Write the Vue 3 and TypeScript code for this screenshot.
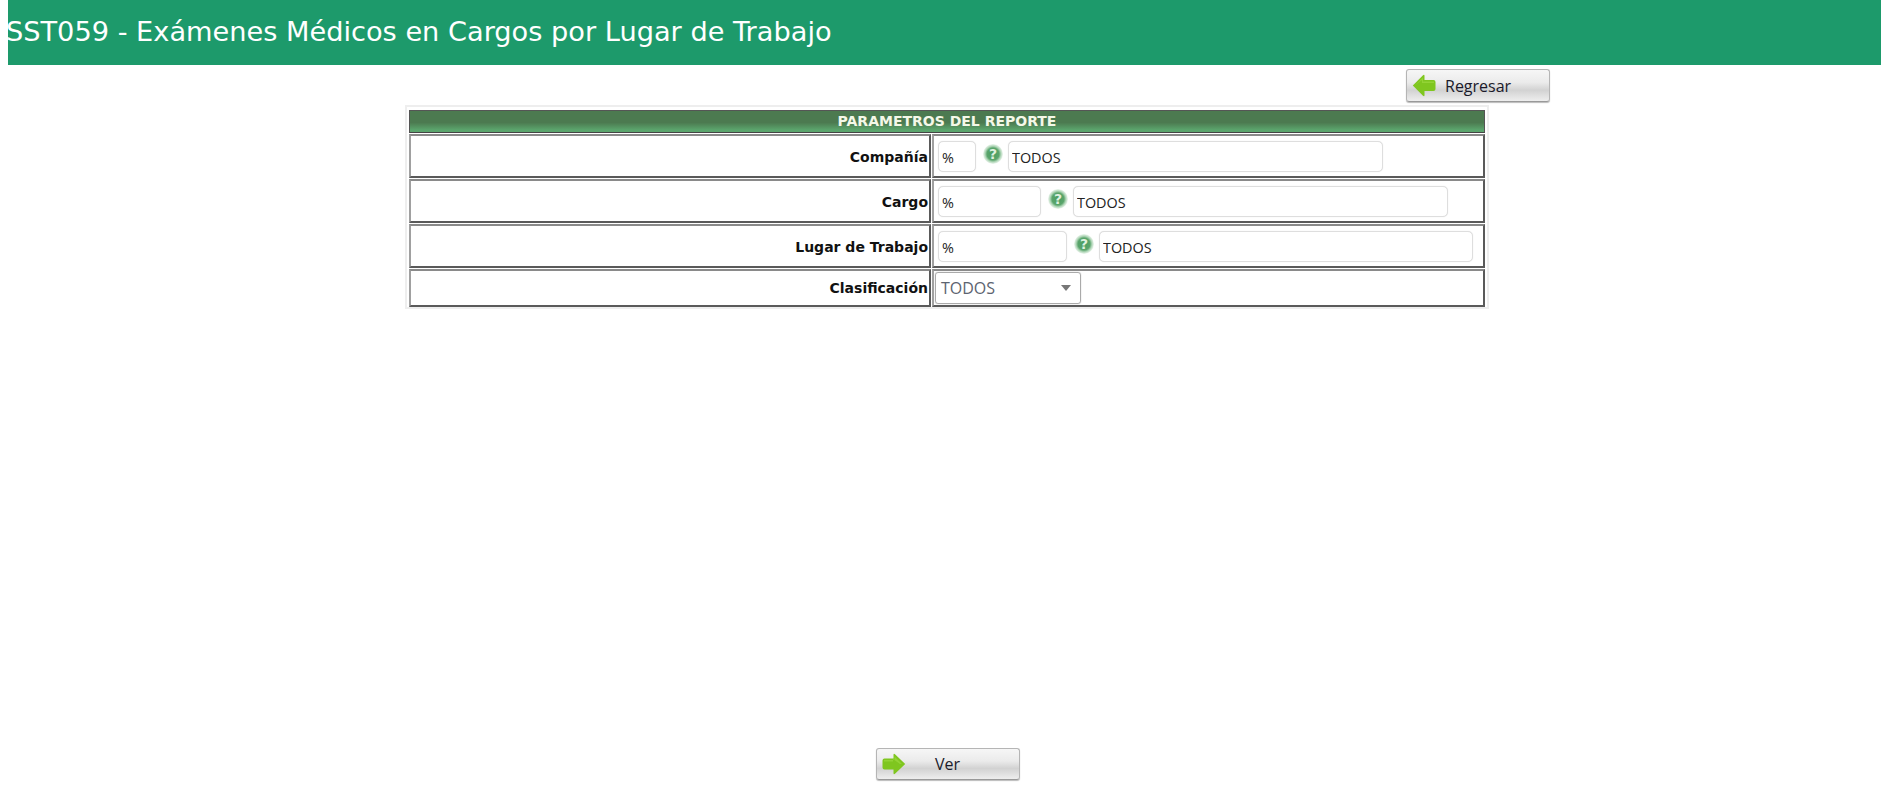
<script setup lang="ts">
interface Row { label: string; codeWidth: number; descWidth: number }
const rows: Row[] = [
  { label: 'Compañía', codeWidth: 38, descWidth: 375 },
  { label: 'Cargo', codeWidth: 103, descWidth: 375 },
  { label: 'Lugar de Trabajo', codeWidth: 129, descWidth: 374 },
]
</script>

<template>
  <div class="page">
    <header class="title-bar"><h1>SST059 - Exámenes Médicos en Cargos por Lugar de Trabajo</h1></header>

    <div class="top-actions">
      <button class="btn" type="button">
        <svg class="arrow" width="24" height="23" viewBox="0 0 24 23">
          <path d="M0.8 11.5 L11 1.2 Q12.5 0 12.5 2 V6 H21.5 Q23.5 6 23.5 8 V15 Q23.5 17 21.5 17 H12.5 V21 Q12.5 23 11 21.8 Z" fill="#7fc61f" />
          <path d="M3 11.5 L11 3.5 V7.5 H22 V9 H10 V6 Z" fill="#9bd93f" opacity="0.7" />
        </svg>
        <span class="btn-text back">Regresar</span>
      </button>
    </div>

    <div class="panel">
      <div class="panel-head">PARAMETROS DEL REPORTE</div>
      <div v-for="r in rows" :key="r.label" class="row">
        <div class="cell label">{{ r.label }}</div>
        <div class="cell field">
          <input class="input" :style="{ width: r.codeWidth + 'px' }" value="%" />
          <svg class="help" width="20" height="20" viewBox="0 0 20 20">
            <defs>
              <radialGradient id="helpGlow" cx="50%" cy="50%" r="50%">
                <stop offset="0%" stop-color="#4a9c5e" />
                <stop offset="60%" stop-color="#5aa56c" />
                <stop offset="80%" stop-color="#b4d8bb" />
                <stop offset="100%" stop-color="#eef6ef" />
              </radialGradient>
            </defs>
            <circle cx="10" cy="10" r="10" fill="url(#helpGlow)" />
            <text x="10" y="15" text-anchor="middle" class="q">?</text>
          </svg>
          <input class="input" :style="{ width: r.descWidth + 'px' }" value="TODOS" />
        </div>
      </div>
      <div class="row last">
        <div class="cell label">Clasificación</div>
        <div class="cell field select-cell">
          <div class="select"><span>TODOS</span><i class="caret"></i></div>
        </div>
      </div>
    </div>

    <div class="bottom-actions">
      <button class="btn low" type="button">
        <svg class="arrow" width="24" height="22" viewBox="0 0 24 22">
          <path d="M23.2 11 L13 1.2 Q11.5 0 11.5 2 V5.5 H2.5 Q0.5 5.5 0.5 7.5 V14.5 Q0.5 16.5 2.5 16.5 H11.5 V20 Q11.5 22 13 20.8 Z" fill="#7fc61f" />
          <path d="M2 7 H12.5 V3.5 L20 11 H18 L11 6 V8.5 H2 Z" fill="#9bd93f" opacity="0.7" />
        </svg>
        <span class="btn-text ver">Ver</span>
      </button>
    </div>
  </div>
</template>

<style>
html, body { margin: 0; background: #fff; }
</style>

<style scoped>
.page { width: 1881px; height: 787px; overflow: hidden; display: flex; flex-direction: column; font-family: "Open Sans", "Noto Sans", sans-serif; }
.title-bar { margin-left: 8px; height: 65px; background: #1d9a6b; flex: none; display: flex; align-items: center; }
.title-bar h1 { margin: 0 0 0 -2px; font: 400 27.2px "DejaVu Sans", sans-serif; color: #fff; white-space: nowrap; padding-bottom: 3px; }
.top-actions { display: flex; justify-content: flex-end; padding: 4px 331px 0 0; height: 36px; flex: none; }
.btn { width: 144px; height: 33px; box-sizing: border-box; display: flex; align-items: center; padding: 0 0 0 5px; border: 1px solid #b5b5b5; border-bottom-color: #999; border-radius: 3px; background: linear-gradient(#f6f6f6 0%, #ebebeb 40%, #d2d2d2 65%, #eeeeee 100%); box-shadow: 0 1px 1px #bbb; font-family: "Open Sans", sans-serif; font-size: 16px; color: #1a1a2a; }
.btn.low { height: 32px; }
.arrow { flex: none; }
.btn-text.back { margin-left: 9px; }
.btn-text.ver { margin-left: 29px; }
.panel { box-sizing: border-box; width: 1084px; height: 204px; margin-left: 405px; border: 2px solid #eeeeee; padding: 3px 2px; flex: none; display: flex; flex-direction: column; gap: 1px; }
.panel-head { height: 23px; box-sizing: border-box; flex: none; text-align: center; background: linear-gradient(#4c7a50 0%, #4c7a50 55%, #5ba56d 90%, #5ba56d 100%); border: 1px solid #555; border-bottom-color: #444; color: #f4f8e8; font: 700 14px/21px "DejaVu Sans", sans-serif; }
.row { display: flex; gap: 1px; height: 44px; flex: none; }
.row.last { height: 38px; }
.cell { box-sizing: border-box; background: #fff; border: 2px solid; border-color: #8a8a8a #5a5a5a #5a5a5a #a0a0a0; display: flex; align-items: center; }
.label { width: 522px; justify-content: flex-end; padding: 1px 1px 0 0; font: 700 14px "DejaVu Sans", sans-serif; color: #111; }
.row.last .label { padding-top: 0; }
.field { width: 553px; padding-left: 4px; }
.select-cell { padding-left: 1px; }
.input { box-sizing: border-box; height: 31px; border: 1px solid #dedede; box-shadow: 0 0 1px #ddd; border-radius: 5px; padding: 4px 3px 2px; font: 400 14.4px "Open Sans", sans-serif; color: #222; background: #fff; outline: none; flex: none; }
.help { flex: none; margin: -4px 5px 0 7px; }
.q { font: 700 14px "DejaVu Sans", sans-serif; fill: #dff0df; }
.select { box-sizing: border-box; width: 146px; height: 32px; border: 1px solid #aaa; border-radius: 3px; box-shadow: 0 0 1px #999; display: flex; align-items: center; justify-content: space-between; padding: 0 9px 0 5px; font-size: 16px; color: #5c6470; }
.caret { width: 0; height: 0; border-left: 5px solid transparent; border-right: 5px solid transparent; border-top: 6px solid #777; }
.bottom-actions { margin-top: auto; padding: 0 0 7px 876px; }
</style>
